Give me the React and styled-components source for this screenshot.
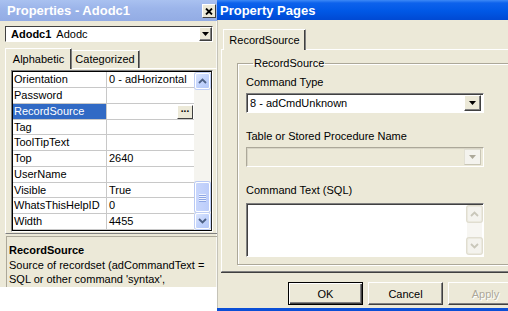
import React from "react";
import styled, { createGlobalStyle, css } from "styled-components";

const GlobalStyle = createGlobalStyle`
  html, body {
    margin: 0;
    padding: 0;
    background: #fff;
  }
  body {
    font-family: "Liberation Sans", Arial, sans-serif;
    font-size: 11px;
    color: #000;
  }
`;

const Screen = styled.div`
  width: 508px;
  height: 311px;
  overflow: hidden;
  display: flex;
  align-items: flex-start;
  background: #fff;
`;

/* ---------- shared bits ---------- */

const TitleBar = styled.div`
  height: ${(p) => (p.active ? 20 : 21)}px;
  display: flex;
  align-items: center;
  justify-content: space-between;
  box-sizing: border-box;
  padding: ${(p) => (p.active ? "0 0 0 3px" : "0 1px 0 7px")};
  color: #fff;
  font-weight: bold;
  font-size: 13px;
  white-space: nowrap;
  background: ${(p) =>
    p.active
      ? "linear-gradient(#3d89f6 0, #0d62ec 3px, #0058e6 55%, #0049d3 100%)"
      : "linear-gradient(#a9c1f0 0, #9cb5ea 40%, #93ace4 100%)"};
`;

const CloseButton = styled.div`
  width: 14px;
  height: 14px;
  box-sizing: border-box;
  display: flex;
  align-items: center;
  justify-content: center;
  background: #ece9d8;
  border: 1px solid;
  border-color: #fff #404040 #404040 #fff;
  margin-top: 1px;
`;

const Tab = styled.div`
  box-sizing: border-box;
  height: ${(p) => (p.selected ? 21 : 18)}px;
  width: ${(p) => p.w}px;
  padding: ${(p) => (p.selected ? "4px 0 0 0" : "2px 0 0 0")};
  text-align: center;
  background: #ece9d8;
  border: 1px solid;
  border-bottom: none;
  border-color: #fff #808080 transparent #fff;
  box-shadow: inset -1px 0 #404040;
  position: relative;
  z-index: ${(p) => (p.selected ? 2 : 1)};
  margin-bottom: ${(p) => (p.selected ? -1 : 0)}px;
  ${(p) =>
    p.selected &&
    css`
      margin-right: -2px;
    `}
`;

const TabStrip = styled.div`
  display: flex;
  align-items: flex-end;
  padding-left: ${(p) => p.indent}px;
  height: 21px;
`;

/* ---------- left window: Properties ---------- */

const LeftWindow = styled.div`
  width: 217px;
  height: 287px;
  flex-shrink: 0;
  background: #ece9d8;
  display: flex;
  flex-direction: column;
  box-shadow: inset -1px 0 #f8f8f4;
`;

const ObjectCombo = styled.div`
  margin: 5px 4px 0 5px;
  height: 16px;
  box-sizing: border-box;
  display: flex;
  align-items: center;
  background: #fff;
  border-top: 1px solid #404040;
  border-left: 1px solid #404040;
  border-right: 1px solid #fff;
  border-bottom: 1px solid #fff;
  padding-left: 5px;
  white-space: nowrap;
`;

const ComboName = styled.span`
  font-weight: bold;
  margin-right: 5px;
`;

const DropButton = styled.div`
  margin-left: auto;
  width: ${(p) => p.w || 13}px;
  height: ${(p) => p.h || 13}px;
  box-sizing: border-box;
  display: flex;
  align-items: center;
  justify-content: center;
  background: ${(p) => (p.disabled ? "#f4f3ee" : "#ece9d8")};
  border: 1px solid;
  border-color: ${(p) =>
    p.disabled ? "#e2e0d4 #c9c6b6 #c9c6b6 #e2e0d4" : "#fff #404040 #404040 #fff"};
  box-shadow: ${(p) => (p.disabled ? "none" : "inset -1px -1px #808080")};
`;

const PropTabs = styled.div`
  margin-top: 5px;
`;

const TabPage = styled.div`
  margin-left: 5px;
  height: 166px;
  box-sizing: border-box;
  border-left: 1px solid #fff;
  border-top: 1px solid #fff;
  border-bottom: 1px solid #808080;
  padding: 1px 0 0 5px;
`;

const Grid = styled.div`
  width: 202px;
  height: 162px;
  box-sizing: border-box;
  border: 1px solid;
  border-color: #808080 #fff #fff #808080;
  display: flex;
`;

const GridInner = styled.div`
  flex: 1;
  display: flex;
  border: 1px solid #000;
  border-right-color: #202020;
  background: #fff;
`;

const GridRows = styled.div`
  flex: 1;
  display: flex;
  flex-direction: column;
`;

const Row = styled.div`
  height: 16px;
  display: grid;
  grid-template-columns: 94px 1fr;
  box-sizing: border-box;
  border-bottom: 1px solid #c8c8c8;
`;

const NameCell = styled.div`
  padding: 1px 0 0 1px;
  border-right: 1px solid #c8c8c8;
  white-space: nowrap;
  overflow: hidden;
  ${(p) =>
    p.selected &&
    css`
      background: #316ac5;
      color: #fff;
    `}
`;

const ValueCell = styled.div`
  padding: 1px 0 0 2px;
  display: flex;
  align-items: flex-start;
  white-space: nowrap;
  overflow: hidden;
`;

const EllipsisButton = styled.div`
  margin: 0 1px 0 auto;
  width: 16px;
  height: 14px;
  box-sizing: border-box;
  background: #ece9d8;
  border: 1px solid;
  border-color: #fff #404040 #404040 #fff;
  font-weight: bold;
  font-size: 10px;
  line-height: 6px;
  text-align: center;
`;

const ScrollBar = styled.div`
  width: 17px;
  display: flex;
  flex-direction: column;
  background: #f5f4ef;
  padding: 1px 0 1px 1px;
  box-sizing: border-box;
`;

const ScrollButton = styled.div`
  height: 16px;
  width: 15px;
  box-sizing: border-box;
  border: 1px solid ${(p) => (p.disabled ? "#ebe9de" : "#ffffff")};
  border-radius: 2px;
  background: ${(p) =>
    p.disabled
      ? "#f4f3ee"
      : "linear-gradient(135deg, #dbe5fd 0%, #c3d4fc 50%, #b4c8f8 100%)"};
  box-shadow: ${(p) => (p.disabled ? "0 0 0 1px #e0ddd0" : "0 0 0 1px #c0cff5")};
  display: flex;
  align-items: center;
  justify-content: center;
`;

const ScrollTrack = styled.div`
  flex: 1;
  display: flex;
  flex-direction: column;
  justify-content: flex-end;
  padding-bottom: 1px;
`;

const ScrollThumb = styled.div`
  height: 30px;
  width: 15px;
  box-sizing: border-box;
  border: 1px solid #fff;
  border-radius: 2px;
  background: linear-gradient(90deg, #c8d6fc, #bccdfa);
  box-shadow: 0 0 0 1px #b8c9f4;
  display: flex;
  flex-direction: column;
  align-items: center;
  justify-content: center;
  gap: 1px;
`;

const Grip = styled.div`
  width: 7px;
  height: 1px;
  background: #eef3fe;
  box-shadow: 0 1px #8ea6e4;
`;

const Description = styled.div`
  margin: 2px 0 0 6px;
  height: 51px;
  box-sizing: border-box;
  border-left: 1px solid #aca899;
  border-top: 1px solid #aca899;
  padding: 7px 0 0 2px;
  white-space: nowrap;
  overflow: hidden;
  font-size: 11px;
`;

const DescTitle = styled.div`
  font-weight: bold;
  height: 14px;
  margin-bottom: 1px;
`;

const DescLine = styled.div`
  height: 14px;
`;

/* ---------- right window: Property Pages ---------- */

const RightWindow = styled.div`
  width: 310px;
  height: 311px;
  flex-shrink: 0;
  background: #ece9d8;
  display: flex;
  flex-direction: column;
  box-sizing: border-box;
  border-bottom: 3px solid #0b4fd6;
  box-shadow: inset 1px 0 #c5c3b8;
`;

const PageBody = styled.div`
  padding: 8px 0 0 4px;
  display: flex;
  flex-direction: column;
  flex: 1;
`;

const TabPanel = styled.div`
  height: 223px;
  box-sizing: border-box;
  border-left: 1px solid #fff;
  border-top: 1px solid #fff;
  border-bottom: 1px solid #808080;
  box-shadow: 0 1px #404040;
  padding: 7px 0 0 15px;
  position: relative;
  z-index: 1;
`;

const GroupBox = styled.fieldset`
  margin: 0;
  padding: 0 0 7px 8px;
  min-width: 0;
  border: 1px solid #aca899;
  box-shadow: inset 1px 1px #fff, 1px 1px #fff;
  display: flex;
  flex-direction: column;
`;

const Legend = styled.legend`
  margin-left: 7px;
  padding: 0 1px;
  line-height: 13px;
`;

const FieldLabel = styled.div`
  height: 13px;
  line-height: 13px;
  margin-top: ${(p) => p.gap}px;
  white-space: nowrap;
`;

const Combo = styled.div`
  margin-top: 4px;
  width: 238px;
  height: 20px;
  box-sizing: border-box;
  display: flex;
  align-items: center;
  padding: 0 2px 0 3px;
  background: ${(p) => (p.disabled ? "#ece9d8" : "#fff")};
  border: 1px solid;
  border-color: ${(p) =>
    p.disabled ? "#aca899 #fff #fff #aca899" : "#808080 #fff #fff #808080"};
  box-shadow: ${(p) =>
    p.disabled ? "inset 1px 1px #d8d5c6" : "inset 1px 1px #404040"};
  white-space: nowrap;
`;

const TextArea = styled.div`
  margin-top: 6px;
  width: 238px;
  height: 54px;
  box-sizing: border-box;
  display: flex;
  justify-content: flex-end;
  background: #fff;
  border: 1px solid;
  border-color: #808080 #fff #fff #808080;
  box-shadow: inset 1px 1px #404040;
  padding: 2px 1px 2px 0;
`;

const TextScroll = styled.div`
  width: 15px;
  display: flex;
  flex-direction: column;
  justify-content: space-between;
  background: #f7f6f2;
`;

const ButtonRow = styled.div`
  display: flex;
  gap: 5px;
  padding-left: 67px;
  margin-top: 10px;
`;

const Button = styled.div`
  width: 75px;
  height: 23px;
  flex-shrink: 0;
  box-sizing: border-box;
  display: flex;
  align-items: center;
  justify-content: center;
  background: #ece9d8;
  border: 1px solid;
  border-color: #fff #404040 #404040 #fff;
  box-shadow: inset -1px -1px #808080;
  font-size: 11px;
  ${(p) =>
    p.isDefault &&
    css`
      border: 1px solid #000;
      box-shadow: inset 1px 1px #fff, inset -1px -1px #404040, inset -2px -2px #808080;
    `}
  ${(p) =>
    p.disabled &&
    css`
      color: #aca899;
      text-shadow: 1px 1px #fff;
    `}
`;

/* ---------- drawings ---------- */

const CloseIcon = () => (
  <svg width="8" height="7" viewBox="0 0 8 7">
    <path d="M1 0.5 L7 6.5 M7 0.5 L1 6.5" stroke="#000" strokeWidth="1.8" />
  </svg>
);

const Triangle = ({ color = "#000" }) => (
  <svg width="7" height="4" viewBox="0 0 7 4">
    <path d="M0 0 H7 L3.5 4 Z" fill={color} />
  </svg>
);

const Chevron = ({ dir, color = "#4d6185" }) => (
  <svg width="9" height="6" viewBox="0 0 9 6">
    <path
      d={dir === "up" ? "M1 5 L4.5 1.5 L8 5" : "M1 1 L4.5 4.5 L8 1"}
      fill="none"
      stroke={color}
      strokeWidth="1.8"
    />
  </svg>
);

const properties = [
  ["Orientation", "0 - adHorizontal"],
  ["Password", ""],
  ["RecordSource", "", true],
  ["Tag", ""],
  ["ToolTipText", ""],
  ["Top", "2640"],
  ["UserName", ""],
  ["Visible", "True"],
  ["WhatsThisHelpID", "0"],
  ["Width", "4455"],
];

const PropertiesWindow = () => (
  <LeftWindow>
    <TitleBar>
      <span>Properties - Adodc1</span>
      <CloseButton>
        <CloseIcon />
      </CloseButton>
    </TitleBar>
    <ObjectCombo>
      <ComboName>Adodc1</ComboName>
      Adodc
      <DropButton w={13} h={14}>
        <Triangle />
      </DropButton>
    </ObjectCombo>
    <PropTabs>
      <TabStrip indent={5}>
        <Tab selected w={67}>
          Alphabetic
        </Tab>
        <Tab w={70}>Categorized</Tab>
      </TabStrip>
      <TabPage>
        <Grid>
          <GridInner>
            <GridRows>
              {properties.map(([name, value, selected]) => (
                <Row key={name}>
                  <NameCell selected={selected}>{name}</NameCell>
                  <ValueCell>
                    {value}
                    {selected && <EllipsisButton>...</EllipsisButton>}
                  </ValueCell>
                </Row>
              ))}
            </GridRows>
            <ScrollBar>
              <ScrollButton>
                <Chevron dir="up" />
              </ScrollButton>
              <ScrollTrack>
                <ScrollThumb>
                  <Grip />
                  <Grip />
                  <Grip />
                  <Grip />
                </ScrollThumb>
              </ScrollTrack>
              <ScrollButton>
                <Chevron dir="down" />
              </ScrollButton>
            </ScrollBar>
          </GridInner>
        </Grid>
      </TabPage>
    </PropTabs>
    <Description>
      <DescTitle>RecordSource</DescTitle>
      <DescLine>Source of recordset (adCommandText =</DescLine>
      <DescLine>SQL or other command 'syntax',</DescLine>
    </Description>
  </LeftWindow>
);

const PropertyPagesWindow = () => (
  <RightWindow>
    <TitleBar active>
      <span>Property Pages</span>
    </TitleBar>
    <PageBody>
      <TabStrip indent={2}>
        <Tab selected w={83}>
          RecordSource
        </Tab>
      </TabStrip>
      <TabPanel>
        <GroupBox>
          <Legend>RecordSource</Legend>
          <FieldLabel gap={6}>Command Type</FieldLabel>
          <Combo>
            8 - adCmdUnknown
            <DropButton w={17} h={16}>
              <Triangle />
            </DropButton>
          </Combo>
          <FieldLabel gap={17}>Table or Stored Procedure Name</FieldLabel>
          <Combo disabled>
            <DropButton disabled w={17} h={16}>
              <Triangle color="#aca899" />
            </DropButton>
          </Combo>
          <FieldLabel gap={17}>Command Text (SQL)</FieldLabel>
          <TextArea>
            <TextScroll>
              <ScrollButton disabled>
                <Chevron dir="up" color="#c9c7ba" />
              </ScrollButton>
              <ScrollButton disabled>
                <Chevron dir="down" color="#c9c7ba" />
              </ScrollButton>
            </TextScroll>
          </TextArea>
        </GroupBox>
      </TabPanel>
      <ButtonRow>
        <Button isDefault>OK</Button>
        <Button>Cancel</Button>
        <Button disabled>Apply</Button>
      </ButtonRow>
    </PageBody>
  </RightWindow>
);

export default function App() {
  return (
    <>
      <GlobalStyle />
      <Screen>
        <PropertiesWindow />
        <PropertyPagesWindow />
      </Screen>
    </>
  );
}
